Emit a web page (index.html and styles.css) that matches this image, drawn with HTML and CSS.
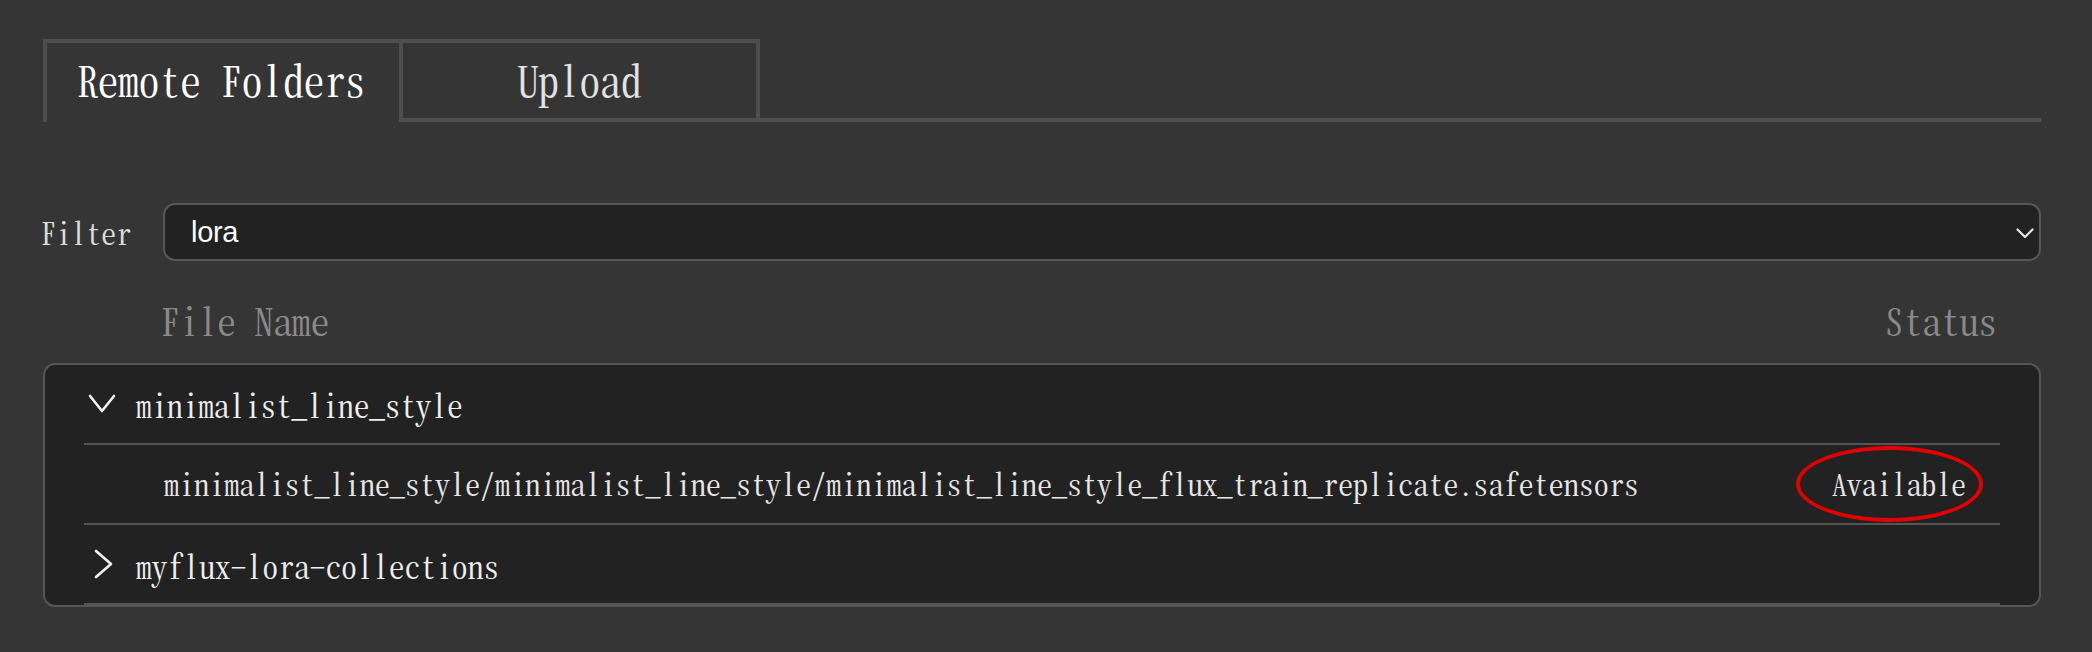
FILE: index.html
```
<!DOCTYPE html>
<html lang="en">
<head>
<meta charset="utf-8">
<title>Remote Folders</title>
<link rel="stylesheet" href="styles.css">
</head>
<body>
<div class="page">
  <div class="tabs">
    <div class="tab tab-active"><span class="st">Remote Folders</span></div>
    <div class="tab tab-idle"><span class="st">Upload</span></div>
  </div>

  <div class="filter-row">
    <label class="filter-label"><span class="st">Filter</span></label>
    <div class="select">
      <span class="select-value">lora</span>
      <svg class="select-caret" width="18" height="11" viewBox="0 0 18 11" aria-hidden="true">
        <path d="M1.5 1.5 L9 9 L16.5 1.5" fill="none" stroke="#e6e6e6" stroke-width="2.2" stroke-linecap="round" stroke-linejoin="round"/>
      </svg>
    </div>
  </div>

  <div class="list-header">
    <span class="col-name"><span class="st">File Name</span></span>
    <span class="col-status"><span class="st">Status</span></span>
  </div>

  <div class="list">
    <div class="row folder">
      <span class="twisty">
        <svg width="28" height="20" viewBox="0 0 28 20" aria-hidden="true">
          <path d="M2 2 L14 17 L26 2" fill="none" stroke="#f2f2f2" stroke-width="2.6" stroke-linecap="round" stroke-linejoin="round"/>
        </svg>
      </span>
      <span class="row-text"><span class="st">minimalist_line_style</span></span>
    </div>
    <div class="row file">
      <span class="file-name"><span class="st">minimalist_line_style/minimalist_line_style/minimalist_line_style_flux_train_replicate.safetensors</span></span>
      <span class="file-status"><span class="st">Available</span></span>
      <span class="mark"></span>
    </div>
    <div class="row folder folder-closed">
      <span class="twisty twisty-closed">
        <svg width="20" height="30" viewBox="0 0 20 30" aria-hidden="true">
          <path d="M2 2 L17 15 L2 28" fill="none" stroke="#f2f2f2" stroke-width="2.6" stroke-linecap="round" stroke-linejoin="round"/>
        </svg>
      </span>
      <span class="row-text"><span class="st">myflux-lora-collections</span></span>
    </div>
  </div>
</div>
</body>
</html>
```
FILE: styles.css
```
html, body {
  margin: 0;
  padding: 0;
  background: #353535;
}

body {
  width: 2092px;
  height: 652px;
  overflow: hidden;
  font-family: "Noto Serif CJK SC", "Liberation Serif", serif;
  font-feature-settings: "hwid" 1;
}

.page {
  padding: 39px 51px 0 43px;
}

.st {
  display: inline-block;
  white-space: pre;
}

/* Tabs */
.tabs {
  display: flex;
  height: 79px;
  border-bottom: 4px solid #4e4e4e;
}

.tab {
  box-sizing: border-box;
  display: flex;
  align-items: center;
  font-size: 41.2px;
  background: #353535;
  border-top: 4px solid #4e4e4e;
  border-left: 4px solid #4e4e4e;
}

.tab-active {
  width: 356px;
  height: 83px;
  margin-bottom: -4px;
  padding-left: 30px;
  padding-bottom: 6px;
  color: #ffffff;
}

.tab-idle {
  width: 361px;
  height: 79px;
  justify-content: center;
  border-right: 4px solid #4e4e4e;
  color: #e2e2e2;
  padding-bottom: 2px;
}

/* Filter */
.filter-row {
  display: flex;
  align-items: center;
  margin-top: 81px;
  gap: 32px;
}

.filter-label {
  margin-left: -2px;
  font-size: 30px;
  color: #dcdcdc;
}

.select {
  box-sizing: border-box;
  flex: 1;
  height: 58px;
  display: flex;
  align-items: center;
  justify-content: space-between;
  padding: 0 5px 0 26px;
  background: #222222;
  border: 2px solid #575757;
  border-radius: 12px;
}

.select-value {
  font-family: "Liberation Sans", Arial, sans-serif;
  font-feature-settings: normal;
  font-size: 29px;
  color: #ffffff;
  letter-spacing: -0.3px;
}

.select-caret {
  display: block;
  margin-top: 2px;
}

/* Header */
.list-header {
  display: flex;
  justify-content: space-between;
  height: 102px;
  box-sizing: border-box;
  padding: 39px 44px 23px 118px;
  line-height: 40px;
  font-size: 37.4px;
  color: #8a8a8a;
}

/* List */
.list {
  background: #222222;
  border: 2px solid #555555;
  border-radius: 12px;
  padding: 0 39px;
}

.row {
  box-sizing: border-box;
  height: 80px;
  display: flex;
  align-items: center;
  border-bottom: 2px solid #555555;
  color: #eeeeee;
  font-size: 31.1px;
}

.twisty {
  width: 52px;
  flex: none;
  display: flex;
  align-items: center;
  padding-left: 4px;
  box-sizing: border-box;
}

.twisty-closed {
  padding-left: 10px;
}

.folder-closed .row-text {
  padding-top: 2px;
  letter-spacing: 0.25px;
}

.file {
  position: relative;
  padding: 0 34px 2px 80px;
  justify-content: space-between;
  color: #e6e6e6;
  font-size: 30px;
}

.file-name {
  letter-spacing: 0.05px;
}

.file-status {
  font-size: 29.8px;
}

.mark {
  position: absolute;
  right: 17px;
  top: 1px;
  width: 187px;
  height: 76px;
  box-sizing: border-box;
  border: 4px solid #e30000;
  border-radius: 50%;
}
```
